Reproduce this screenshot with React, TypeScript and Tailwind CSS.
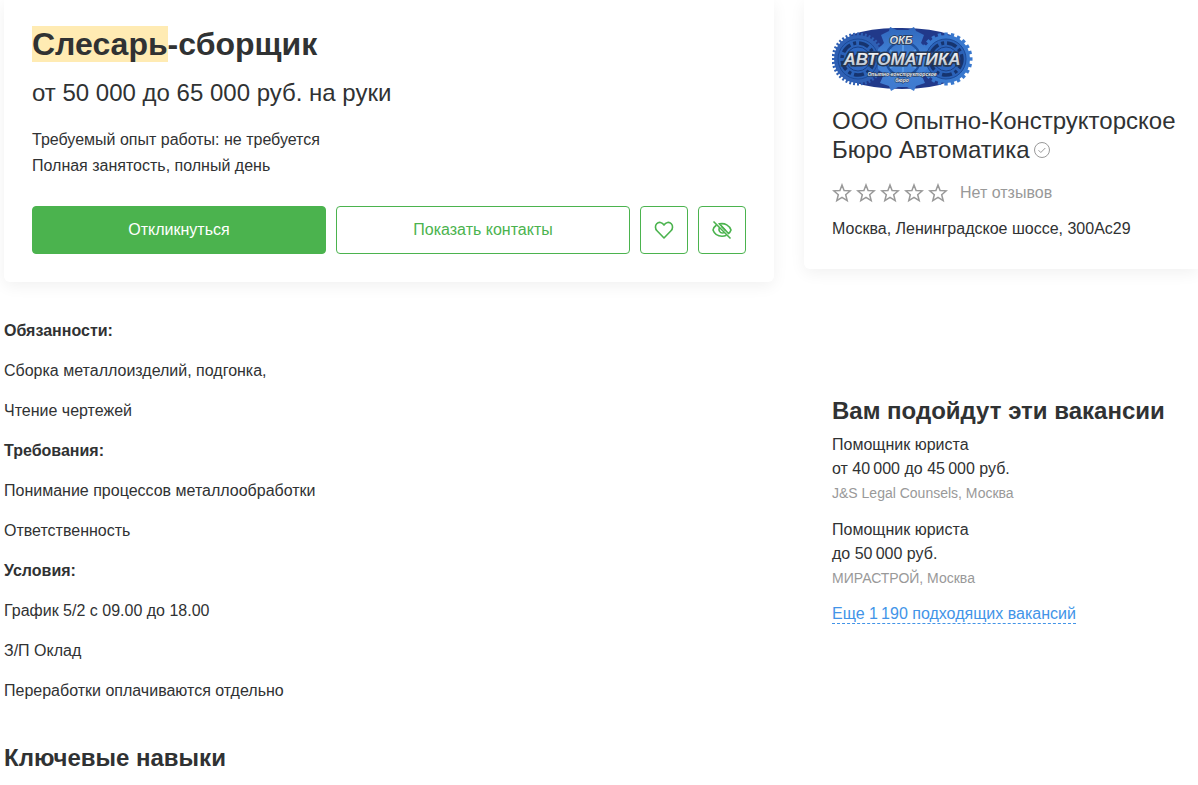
import { useId } from "react";

const duties = [
  { text: "Обязанности:", bold: true },
  { text: "Сборка металлоизделий, подгонка," },
  { text: "Чтение чертежей" },
  { text: "Требования:", bold: true },
  { text: "Понимание процессов металлообработки" },
  { text: "Ответственность" },
  { text: "Условия:", bold: true },
  { text: "График 5/2 с 09.00 до 18.00" },
  { text: "З/П Оклад" },
  { text: "Переработки оплачиваются отдельно" },
];

const similar = [
  { title: "Помощник юриста", salary: "от 40\u2009000 до 45\u2009000 руб.", company: "J&S Legal Counsels, Москва" },
  { title: "Помощник юриста", salary: "до 50\u2009000 руб.", company: "МИРАСТРОЙ, Москва" },
];

type GearProps = { cx: number; cy: number; r: number; teeth: number; toothWidth: number; rim: string };

function Gear({ cx, cy, r, teeth, toothWidth, rim }: GearProps) {
  return (
    <g>
      {Array.from({ length: teeth }).map((_, i) => (
        <rect
          key={i}
          x={cx - toothWidth / 2}
          y={cy - r - 2.5}
          width={toothWidth}
          height="5"
          fill={rim}
          transform={`rotate(${(360 / teeth) * i} ${cx} ${cy})`}
        />
      ))}
      <circle cx={cx} cy={cy} r={r} fill={rim} />
      <circle cx={cx} cy={cy} r={r - 4} fill="#2b62b8" stroke="#1c4a98" strokeWidth="1" />
      <circle cx={cx} cy={cy} r={r - 8} fill="none" stroke="#16346f" strokeWidth="3.5" strokeDasharray="10 3 3 3" />
      <circle cx={cx} cy={cy} r={r - 12} fill="#2e68c2" stroke="#1a4188" />
      <circle cx={cx} cy={cy} r="5" fill="#16346f" />
    </g>
  );
}

function CompanyLogo() {
  const id = useId();
  return (
    <svg width="142" height="66" viewBox="0 0 142 66" role="img" aria-label="ОКБ Автоматика">
      <defs>
        <linearGradient id={`${id}-plate`} x1="0" y1="0" x2="0" y2="1">
          <stop offset="0" stopColor="#3068bd" />
          <stop offset="0.5" stopColor="#4384d8" />
          <stop offset="1" stopColor="#3f79ce" />
        </linearGradient>
        <linearGradient id={`${id}-steel`} x1="0" y1="0" x2="0" y2="1">
          <stop offset="0" stopColor="#ffffff" />
          <stop offset="1" stopColor="#a9b6c4" />
        </linearGradient>
      </defs>
      <path d="M18 9 Q42 1 70 2 Q100 2 119 9 L119 55 Q100 63 70 63 Q40 63 18 55Z" fill="#21398a" />
      <Gear cx={26} cy={33} r={24} teeth={40} toothWidth={2} rim="#2f60b4" />
      <Gear cx={114} cy={33} r={24} teeth={24} toothWidth={3.4} rim="#3978ce" />
      <path
        d="M49 9 L57 5 L58 1 L65 4 H76 L82 1 L84 5 L92 9 L89 17 L95 23 V43 L89 48 L93 57 L84 60 L82 65 L75 61 H66 L59 65 L57 60 L48 57 L52 48 L46 43 V23 L52 17Z"
        fill={`url(#${id}-plate)`}
      />
      <circle cx="71" cy="33" r="17" fill="none" stroke="#1f519f" strokeWidth="2.5" />
      <path d="M71 17v32M58 24l26 18M84 24L58 42" stroke="#5698e4" strokeWidth="2" />
      <g
        fontFamily="'Liberation Sans Narrow', 'Liberation Sans', Arial, sans-serif"
        fontStyle="italic"
        fontWeight="bold"
        textAnchor="middle"
        paintOrder="stroke"
        stroke="#27364f"
      >
        <text x="69" y="18" fontSize="11" strokeWidth="1.5" fill={`url(#${id}-steel)`}>ОКБ</text>
        <text x="70" y="39" fontSize="17" strokeWidth="3" fill={`url(#${id}-steel)`}>АВТОМАТИКА</text>
        <text x="70" y="50" fontSize="5" strokeWidth="1" fill="#e6edf6">Опытно-конструкторское</text>
        <text x="70" y="56" fontSize="5" strokeWidth="1" fill="#e6edf6">бюро</text>
      </g>
    </svg>
  );
}

function Star() {
  return (
    <svg width="20" height="20" viewBox="0 0 20 20" fill="none" stroke="#999" strokeWidth="1.5">
      <path d="M10 2l2.100 5.500 6.200.3-4.600 3.900 1.500 6-5.200-3.300-5.200 3.300 1.500-6L1.700 7.800l6.200-.3z" />
    </svg>
  );
}

export default function App() {
  return (
    <div className="flex min-h-screen items-start gap-[30px] overflow-hidden bg-white pl-1 font-['Liberation_Sans',Arial,sans-serif] text-base text-[#303233]">
      <main className="min-w-0 flex-1">
        {/* Vacancy header */}
        <section className="rounded-b-md px-7 pt-6 pb-7 shadow-[0_4px_16px_rgba(0,0,0,0.06)]">
          <h1 className="text-[32px] leading-10 font-bold">
            <mark className="bg-[#ffebb3] text-inherit">Слесарь</mark>-сборщик
          </h1>
          <p className="mt-3 text-2xl leading-[34px]">от 50 000 до 65 000 руб. на руки</p>
          <div className="mt-[17px] leading-[26px]">
            <p>Требуемый опыт работы: не требуется</p>
            <p>Полная занятость, полный день</p>
          </div>
          <div className="mt-[27px] flex gap-[10px]">
            <button className="h-12 flex-1 rounded border border-[#4bb34e] bg-[#4bb34e] text-white">Откликнуться</button>
            <button className="h-12 flex-1 rounded border border-[#4bb34e] text-[#4bb34e]">Показать контакты</button>
            <button
              aria-label="В избранное"
              className="flex size-12 items-center justify-center rounded border border-[#4bb34e] text-[#4bb34e]"
            >
              <svg width="20" height="20" viewBox="0 0 20 20" fill="none" stroke="currentColor" strokeWidth="1.6" strokeLinejoin="round">
                <path d="M10 18L3 10.800C1 8.700 1 5.500 2.700 3.700C4.700 1.600 8.200 2 10 5C11.800 2 15.300 1.600 17.300 3.700C19 5.500 19 8.700 17 10.800Z" />
              </svg>
            </button>
            <button
              aria-label="Скрыть вакансию"
              className="flex size-12 items-center justify-center rounded border border-[#4bb34e] text-[#4bb34e]"
            >
              <svg width="20" height="20" viewBox="0 0 20 20" fill="none" stroke="currentColor" strokeWidth="1.6">
                <path d="M1.500 1.500L18.500 18.500" />
                <path d="M4.500 5C2.500 6.500 1.200 8.300 1 10C2.500 14.300 6 16.200 10 16.200C11.600 16.200 13 15.900 14.500 15.200" />
                <path d="M7.500 3.900C13 2.800 17.500 5.500 19 10C18.500 11.500 17.700 12.700 16.500 13.500Z" />
                <path d="M7.300 7.800C6.300 10.500 8 13 10.300 13C11.200 13 12 12.700 12.500 12.200" />
                <path d="M9.500 6.500L13.500 10.500" />
              </svg>
            </button>
          </div>
        </section>

        {/* Description */}
        <section className="mt-[39px] flex flex-col gap-5 leading-5">
          {duties.map((d) => (
            <p key={d.text} className={d.bold ? "font-bold" : ""}>
              {d.text}
            </p>
          ))}
        </section>
        <h2 className="mt-[41px] text-2xl leading-8 font-bold">Ключевые навыки</h2>
      </main>

      <aside className="w-[394px] shrink-0">
        {/* Company */}
        <section className="rounded-bl-md pt-[26px] pb-7 pl-7 shadow-[0_4px_16px_rgba(0,0,0,0.06)]">
          <CompanyLogo />
          <h2 className="mt-[14px] text-2xl leading-[29px]">
            ООО Опытно-Конструкторское Бюро Автоматика{" "}
            <svg className="-ml-0.5 inline-block align-baseline" width="16" height="16" viewBox="0 0 16 16" fill="none" stroke="#999">
              <circle cx="8" cy="8" r="7.500" />
              <path d="M4.500 8.200l2.300 2.300 4.500-4.500" />
            </svg>
          </h2>
          <div className="mt-[17px] flex items-center gap-1 leading-6 text-[#999]">
            {[1, 2, 3, 4, 5].map((n) => (
              <Star key={n} />
            ))}
            <span className="ml-2">Нет отзывов</span>
          </div>
          <p className="mt-3 leading-6">Москва, Ленинградское шоссе, 300Ас29</p>
        </section>

        {/* Similar vacancies */}
        <section className="mt-[126px] pl-7">
          <h2 className="text-2xl leading-8 font-bold">Вам подойдут эти вакансии</h2>
          <ul className="mt-[6px] flex flex-col gap-[13px] leading-6">
            {similar.map((v) => (
              <li key={v.company}>
                <p>{v.title}</p>
                <p>{v.salary}</p>
                <p className="text-sm leading-6 text-[#999]">{v.company}</p>
              </li>
            ))}
          </ul>
          <a href="#similar" className="mt-[15px] inline-block border-b border-dashed border-[#4294e8] leading-[18px] text-[#4294e8]">
            Еще 1&#8201;190 подходящих вакансий
          </a>
        </section>
      </aside>
    </div>
  );
}
